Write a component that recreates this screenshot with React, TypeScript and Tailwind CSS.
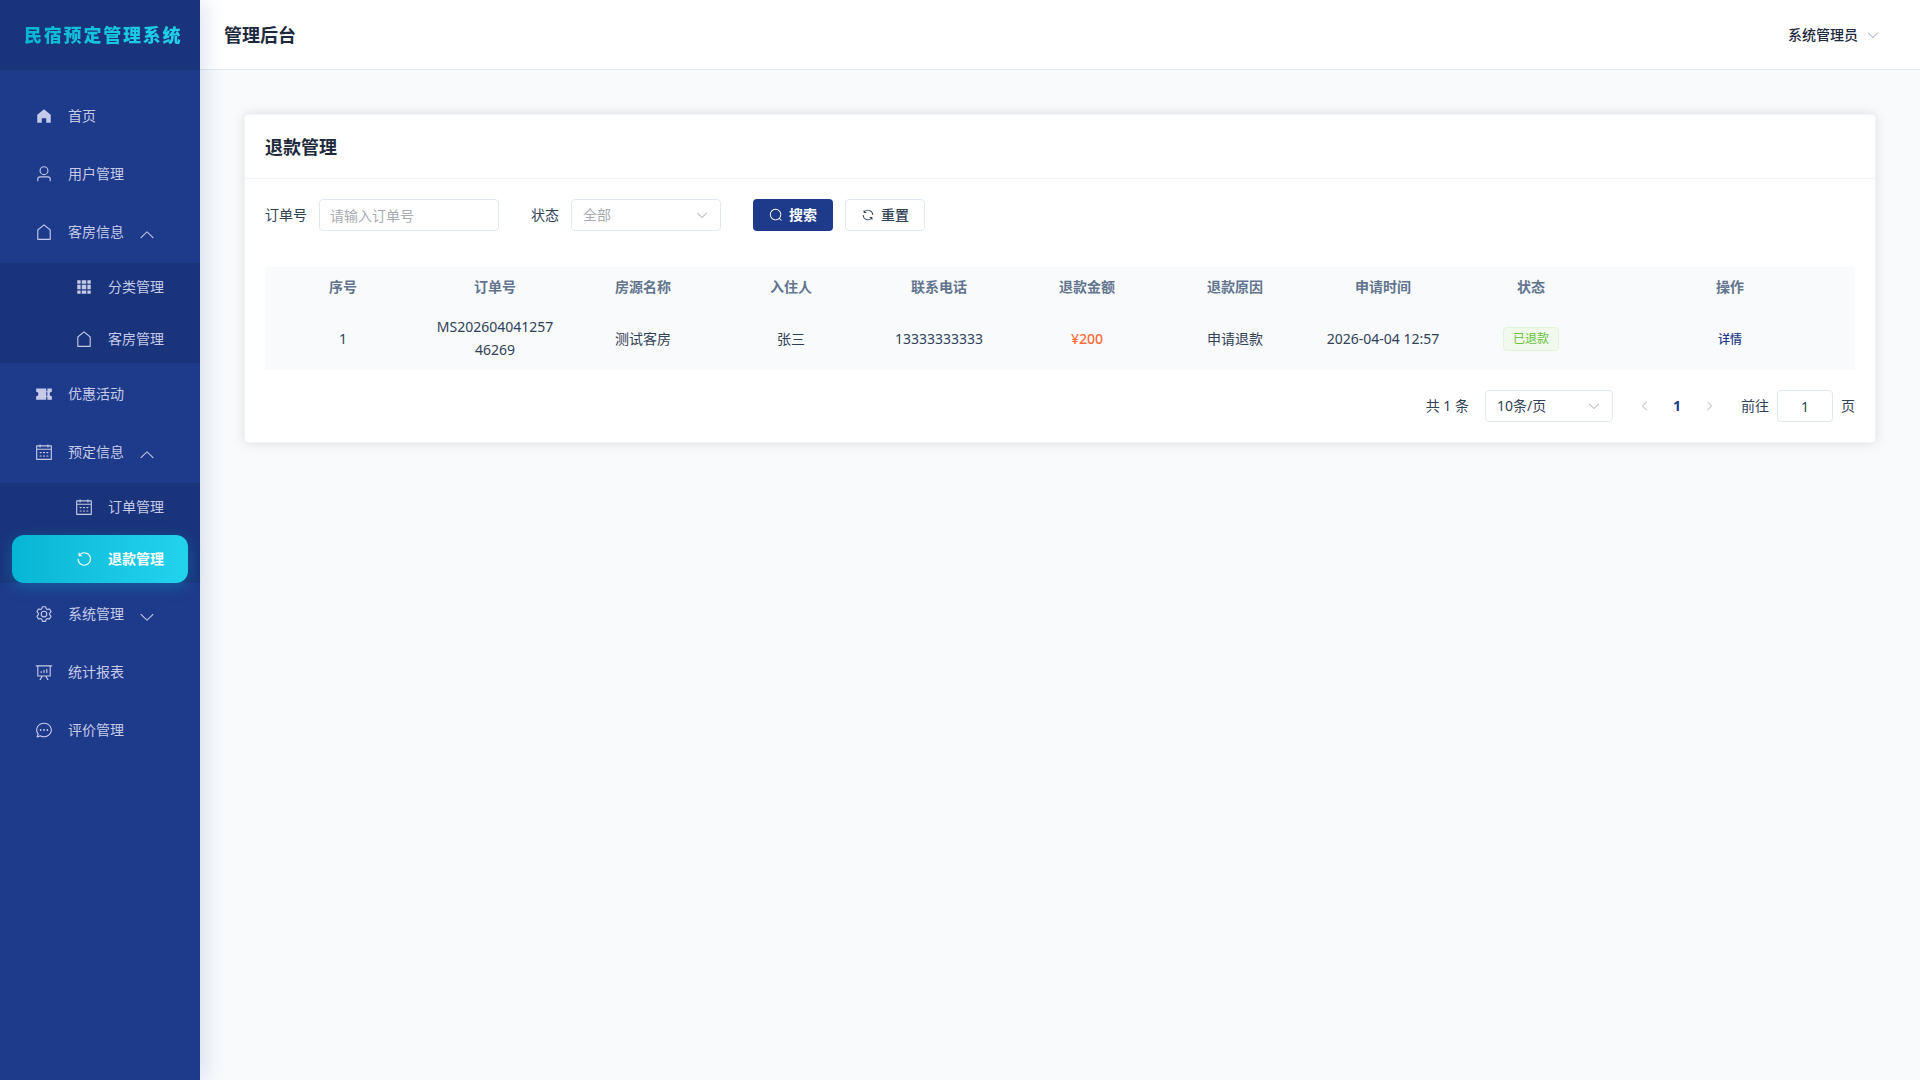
import { useState } from "react";

type IconProps = { d: string; className?: string };

const icons = {
  home: "M512 128 128 447.936V896h255.936V640H640v256h255.936V447.936z",
  user: "M512 512a192 192 0 1 0 0-384 192 192 0 0 0 0 384m0 64a256 256 0 1 1 0-512 256 256 0 0 1 0 512m320 320v-96a96 96 0 0 0-96-96H288a96 96 0 0 0-96 96v96a32 32 0 1 1-64 0v-96a160 160 0 0 1 160-160h448a160 160 0 0 1 160 160v96a32 32 0 1 1-64 0",
  house:
    "M192 413.952V896h640V413.952L512 147.328zM139.52 374.4l352-293.312a32 32 0 0 1 40.96 0l352 293.312A32 32 0 0 1 896 398.976V928a32 32 0 0 1-32 32H160a32 32 0 0 1-32-32V398.976a32 32 0 0 1 11.52-24.576",
  grid: "M640 384v256H384V384zm64 0h192v256H704zm-64 512H384V704h256zm64 0V704h192v192zm-64-768v192H384V128zm64 0h192v192H704zM320 384v256H128V384zm0 512H128V704h192zm0-768v192H128V128z",
  ticket:
    "M640 832H64V640a128 128 0 1 0 0-256V192h576v160h64V192h256v192a128 128 0 1 0 0 256v192H704V672h-64zm0-416v192h64V416z",
  calendar:
    "M128 384v512h768V192H768v32a32 32 0 1 1-64 0v-32H320v32a32 32 0 0 1-64 0v-32H128v128h768v64zm192-256h384V96a32 32 0 1 1 64 0v32h160a32 32 0 0 1 32 32v768a32 32 0 0 1-32 32H96a32 32 0 0 1-32-32V160a32 32 0 0 1 32-32h160V96a32 32 0 0 1 64 0zm-32 384h64a32 32 0 0 1 0 64h-64a32 32 0 0 1 0-64m0 192h64a32 32 0 1 1 0 64h-64a32 32 0 1 1 0-64m192-192h64a32 32 0 0 1 0 64h-64a32 32 0 0 1 0-64m0 192h64a32 32 0 1 1 0 64h-64a32 32 0 1 1 0-64m192-192h64a32 32 0 1 1 0 64h-64a32 32 0 1 1 0-64m0 192h64a32 32 0 1 1 0 64h-64a32 32 0 1 1 0-64",
  refreshLeft:
    "M289.088 296.704h92.992a32 32 0 0 1 0 64H232.96a32 32 0 0 1-32-32V179.712a32 32 0 0 1 64 0v50.56a384 384 0 0 1 643.84 282.88 384 384 0 0 1-383.936 384 384 384 0 0 1-384-384h64a320 320 0 1 0 640 0 320 320 0 0 0-555.712-216.448z",
  setting:
    "M600.704 64a32 32 0 0 1 30.464 22.208l35.2 109.376c14.784 7.232 28.928 15.36 42.432 24.512l112.384-24.192a32 32 0 0 1 34.432 15.36L944.32 364.8a32 32 0 0 1-4.032 37.504l-77.12 85.12a357.12 357.12 0 0 1 0 49.024l77.12 85.248a32 32 0 0 1 4.032 37.504l-88.704 153.6a32 32 0 0 1-34.432 15.296L708.8 803.904c-13.44 9.088-27.648 17.28-42.368 24.512l-35.264 109.376A32 32 0 0 1 600.704 960H423.296a32 32 0 0 1-30.464-22.208L357.696 828.48a351.616 351.616 0 0 1-42.56-24.64l-112.32 24.256a32 32 0 0 1-34.432-15.36L79.68 659.2a32 32 0 0 1 4.032-37.504l77.12-85.248a357.12 357.12 0 0 1 0-48.896l-77.12-85.248A32 32 0 0 1 79.68 364.8l88.704-153.6a32 32 0 0 1 34.432-15.296l112.32 24.256c13.568-9.152 27.776-17.408 42.56-24.64l35.2-109.312A32 32 0 0 1 423.232 64H600.64zm-23.424 64H446.72l-36.352 113.088-24.512 11.968a294.113 294.113 0 0 0-34.816 20.096l-22.656 15.36-116.224-25.088-65.28 113.152 79.68 88.192-1.92 27.136a293.12 293.12 0 0 0 0 40.192l1.92 27.136-79.808 88.192 65.344 113.152 116.224-25.024 22.656 15.296a294.113 294.113 0 0 0 34.816 20.096l24.512 11.968L446.72 896h130.688l36.48-113.152 24.448-11.904a288.282 288.282 0 0 0 34.752-20.096l22.592-15.296 116.288 25.024 65.28-113.152-79.744-88.192 1.92-27.136a293.12 293.12 0 0 0 0-40.256l-1.92-27.136 79.808-88.128-65.344-113.152-116.288 24.96-22.592-15.232a287.616 287.616 0 0 0-34.752-20.096l-24.448-11.904L577.344 128zM512 320a192 192 0 1 1 0 384 192 192 0 0 1 0-384m0 64a128 128 0 1 0 0 256 128 128 0 0 0 0-256",
  report:
    "m665.216 768 110.848 192h-73.856L591.36 768H433.024L322.176 960H248.32l110.848-192H160a32 32 0 0 1-32-32V192H64a32 32 0 0 1 0-64h896a32 32 0 1 1 0 64h-64v544a32 32 0 0 1-32 32zM832 192H192v512h640zM352 448a32 32 0 0 1 32 32v64a32 32 0 0 1-64 0v-64a32 32 0 0 1 32-32m160-64a32 32 0 0 1 32 32v128a32 32 0 0 1-64 0V416a32 32 0 0 1 32-32m160-64a32 32 0 0 1 32 32v192a32 32 0 1 1-64 0V352a32 32 0 0 1 32-32",
  chat: "m174.72 855.68 135.296-45.12 23.68 11.84C388.096 849.536 448.576 864 512 864c211.84 0 384-166.784 384-352S723.84 160 512 160 128 326.784 128 512c0 69.12 24.96 139.264 70.848 199.232l22.08 28.8-46.272 115.584zm-45.248 82.56A32 32 0 0 1 89.6 896l58.368-145.92C94.72 680.32 64 596.864 64 512 64 299.904 256 96 512 96s448 203.904 448 416-192 416-448 416a461.056 461.056 0 0 1-206.912-48.384l-175.616 58.56zM512 563.2a51.2 51.2 0 1 1 0-102.4 51.2 51.2 0 0 1 0 102.4m192 0a51.2 51.2 0 1 1 0-102.4 51.2 51.2 0 0 1 0 102.4m-384 0a51.2 51.2 0 1 1 0-102.4 51.2 51.2 0 0 1 0 102.4",
  search:
    "m795.904 750.72 124.992 124.928a32 32 0 0 1-45.248 45.248L750.656 795.904a416 416 0 1 1 45.248-45.248zM480 832a352 352 0 1 0 0-704 352 352 0 0 0 0 704",
  refresh:
    "M771.776 794.88A384 384 0 0 1 128 512h64a320 320 0 0 0 555.712 216.448H654.72a32 32 0 1 1 0-64h149.056a32 32 0 0 1 32 32v148.928a32 32 0 1 1-64 0v-50.56zM276.288 295.616h92.992a32 32 0 0 1 0 64H220.16a32 32 0 0 1-32-32V178.56a32 32 0 0 1 64 0v50.56A384 384 0 0 1 896.128 512h-64a320 320 0 0 0-555.776-216.384z",
  arrowDown:
    "M831.872 340.864 512 652.672 192.128 340.864a30.592 30.592 0 0 0-42.752 0 29.12 29.12 0 0 0 0 41.6L489.664 714.24a32 32 0 0 0 44.672 0l340.288-331.712a29.12 29.12 0 0 0 0-41.728 30.592 30.592 0 0 0-42.752 0z",
  arrowLeft:
    "M609.408 149.376 277.76 489.6a32 32 0 0 0 0 44.672l331.648 340.352a29.12 29.12 0 0 0 41.728 0 30.592 30.592 0 0 0 0-42.752L339.264 511.936l311.872-319.872a30.592 30.592 0 0 0 0-42.688 29.12 29.12 0 0 0-41.728 0z",
};

function Icon({ d, className = "size-[18px]" }: IconProps) {
  return (
    <svg viewBox="0 0 1024 1024" fill="currentColor" aria-hidden="true" className={`shrink-0 ${className}`}>
      <path d={d} />
    </svg>
  );
}

type MenuChild = { label: string; icon: string; active?: boolean };
type MenuEntry = { label: string; icon: string; open?: boolean; children?: MenuChild[] };

const menu: MenuEntry[] = [
  { label: "首页", icon: icons.home },
  { label: "用户管理", icon: icons.user },
  {
    label: "客房信息",
    icon: icons.house,
    open: true,
    children: [
      { label: "分类管理", icon: icons.grid },
      { label: "客房管理", icon: icons.house },
    ],
  },
  { label: "优惠活动", icon: icons.ticket },
  {
    label: "预定信息",
    icon: icons.calendar,
    open: true,
    children: [
      { label: "订单管理", icon: icons.calendar },
      { label: "退款管理", icon: icons.refreshLeft, active: true },
    ],
  },
  { label: "系统管理", icon: icons.setting, open: false, children: [] },
  { label: "统计报表", icon: icons.report },
  { label: "评价管理", icon: icons.chat },
];

function MenuGroup({ entry }: { entry: MenuEntry }) {
  const [open, setOpen] = useState(entry.open ?? false);

  return (
    <li className="flex flex-col gap-1">
      <button
        type="button"
        aria-expanded={open}
        onClick={() => setOpen(!open)}
        className="mx-3 flex h-[54px] items-center gap-3 rounded-xl px-5"
      >
        <span className="flex w-6 justify-center">
          <Icon d={entry.icon} />
        </span>
        {entry.label}
        <Icon
          d={icons.arrowDown}
          className={open ? "mt-1.5 ml-0.5 size-[18px] rotate-180" : "mt-1.5 ml-0.5 size-[18px]"}
        />
      </button>
      {open && entry.children && entry.children.length > 0 && (
        <ul className="flex flex-col gap-1 bg-black/10">
          {entry.children.map((child) => (
            <li key={child.label}>
              <a
                href="#"
                className={
                  child.active
                    ? "mx-3 flex h-12 items-center gap-3 rounded-xl bg-linear-to-r from-[#06b6d4] to-[#22d3ee] pl-[60px] font-semibold text-white shadow-[0_4px_16px_rgba(6,182,212,0.3)]"
                    : "mx-3 flex h-12 items-center gap-3 rounded-xl pl-[60px]"
                }
              >
                <span className="flex w-6 justify-center">
                  <Icon d={child.icon} />
                </span>
                {child.label}
              </a>
            </li>
          ))}
        </ul>
      )}
    </li>
  );
}

function Sidebar() {
  return (
    <aside className="z-10 flex w-50 shrink-0 flex-col bg-[#1e3a8a] text-[#c5cae9] shadow-[4px_0_20px_rgba(30,58,138,0.15)]">
      <div className="flex h-[70px] items-center bg-black/10 pl-6">
        <span className="bg-linear-to-r from-[#06b6d4] to-[#22d3ee] bg-clip-text text-lg font-extrabold tracking-widest whitespace-nowrap text-transparent">
          民宿预定管理系统
        </span>
      </div>
      <nav className="pt-[19px]">
        <ul className="flex flex-col gap-1">
          {menu.map((entry) =>
            entry.children ? (
              <MenuGroup key={entry.label} entry={entry} />
            ) : (
              <li key={entry.label}>
                <a href="#" className="mx-3 flex h-[54px] items-center gap-3 rounded-xl px-5">
                  <span className="flex w-6 justify-center">
                    <Icon d={entry.icon} />
                  </span>
                  {entry.label}
                </a>
              </li>
            )
          )}
        </ul>
      </nav>
    </aside>
  );
}

function SearchForm() {
  return (
    <form className="flex flex-wrap items-center gap-8" onSubmit={(e) => e.preventDefault()}>
      <div className="flex items-center gap-3">
        <label htmlFor="orderNo">订单号</label>
        <input
          id="orderNo"
          type="text"
          placeholder="请输入订单号"
          className="h-8 w-45 rounded border border-slate-200 bg-white px-[10px] outline-none placeholder:text-[#a8abb2]"
        />
      </div>
      <div className="flex items-center gap-3">
        <label htmlFor="status">状态</label>
        <div className="relative">
          <select
            id="status"
            className="h-8 w-[150px] appearance-none rounded border border-slate-200 bg-white px-[11px] text-[#a8abb2] outline-none"
          >
            <option>全部</option>
            <option>已退款</option>
          </select>
          <Icon
            d={icons.arrowDown}
            className="pointer-events-none absolute top-[9px] right-3 size-[14px] text-[#a8abb2]"
          />
        </div>
      </div>
      <div className="flex gap-3">
        <button
          type="submit"
          className="flex h-8 w-20 items-center justify-center gap-1.5 rounded bg-[#1e3a8a] font-semibold text-white"
        >
          <Icon d={icons.search} className="size-[14px]" />
          搜索
        </button>
        <button
          type="reset"
          className="flex h-8 w-20 items-center justify-center gap-1.5 rounded border border-slate-200 bg-white font-medium"
        >
          <Icon d={icons.refresh} className="size-[14px]" />
          重置
        </button>
      </div>
    </form>
  );
}

const columns = ["序号", "订单号", "房源名称", "入住人", "联系电话", "退款金额", "退款原因", "申请时间", "状态", "操作"];

const refunds = [
  {
    id: 1,
    orderNo: "MS20260404125746269",
    room: "测试客房",
    guest: "张三",
    phone: "13333333333",
    amount: "¥200",
    reason: "申请退款",
    time: "2026-04-04 12:57",
    status: "已退款",
  },
];

function RefundTable() {
  return (
    <table className="mt-9 w-full table-fixed border-separate border-spacing-0 bg-slate-50 text-center leading-[23px] [&_td]:border-b [&_td]:border-slate-50 [&_td]:px-3 [&_th]:border-b [&_th]:border-slate-50 [&_th]:px-3">
      <colgroup>
        <col className="w-[156px]" />
        <col span={8} />
        <col className="w-[250px]" />
      </colgroup>
      <thead className="text-slate-500">
        <tr className="h-10">
          {columns.map((name) => (
            <th key={name} className="pb-px font-semibold">
              {name}
            </th>
          ))}
        </tr>
      </thead>
      <tbody>
        {refunds.map((row) => (
          <tr key={row.id} className="h-[63px]">
            <td>{row.id}</td>
            <td className="break-all">{row.orderNo}</td>
            <td>{row.room}</td>
            <td>{row.guest}</td>
            <td>{row.phone}</td>
            <td className="font-medium text-[#ff6b35]">{row.amount}</td>
            <td>{row.reason}</td>
            <td>{row.time}</td>
            <td>
              <span className="inline-flex h-6 items-center rounded border border-[#e1f3d8] bg-[#f0f9eb] px-[9px] text-xs text-[#67c23a]">
                {row.status}
              </span>
            </td>
            <td>
              <button type="button" className="text-xs font-medium text-[#1e3a8a]">
                详情
              </button>
            </td>
          </tr>
        ))}
      </tbody>
    </table>
  );
}

function Pagination() {
  return (
    <div className="mt-5 flex items-center justify-end gap-4">
      <span>共 1 条</span>
      <div className="relative">
        <select
          aria-label="每页条数"
          className="h-8 w-32 appearance-none rounded border border-slate-200 bg-white px-[11px] outline-none"
        >
          <option>10条/页</option>
          <option>20条/页</option>
        </select>
        <Icon
          d={icons.arrowDown}
          className="pointer-events-none absolute top-[9px] right-3 size-[14px] text-[#a8abb2]"
        />
      </div>
      <div className="flex">
        <button type="button" disabled aria-label="上一页" className="flex size-8 items-center justify-center text-[#a8abb2]">
          <Icon d={icons.arrowLeft} className="size-3" />
        </button>
        <button type="button" aria-current="page" className="size-8 font-bold text-[#1e3a8a]">
          1
        </button>
        <button type="button" disabled aria-label="下一页" className="flex size-8 items-center justify-center text-[#a8abb2]">
          <Icon d={icons.arrowLeft} className="size-3 rotate-180" />
        </button>
      </div>
      <div className="flex items-center gap-2">
        <label htmlFor="jump">前往</label>
        <input
          id="jump"
          type="text"
          defaultValue="1"
          className="h-8 w-14 rounded border border-slate-200 bg-white text-center outline-none"
        />
        <span>页</span>
      </div>
    </div>
  );
}

export default function App() {
  return (
    <div className="flex min-h-screen bg-slate-50 font-[family-name:'Noto_Sans','Noto_Sans_CJK_SC',sans-serif] text-sm text-slate-700">
      <Sidebar />
      <div className="flex min-w-0 flex-1 flex-col">
        <header className="flex h-[70px] items-center justify-between border-b border-slate-200 bg-white pr-10 pl-6">
          <h1 className="text-lg font-bold text-slate-800">管理后台</h1>
          <button type="button" className="flex items-center gap-2 font-medium text-slate-800">
            系统管理员
            <Icon d={icons.arrowDown} className="size-[14px] text-slate-400" />
          </button>
        </header>
        <main className="p-11">
          <section className="rounded border border-slate-100 bg-white shadow-[0_0_12px_rgba(0,0,0,0.12)]">
            <h2 className="flex h-16 items-center border-b border-slate-100 px-5 text-lg font-bold text-slate-800">
              退款管理
            </h2>
            <div className="p-5">
              <SearchForm />
              <RefundTable />
              <Pagination />
            </div>
          </section>
        </main>
      </div>
    </div>
  );
}
